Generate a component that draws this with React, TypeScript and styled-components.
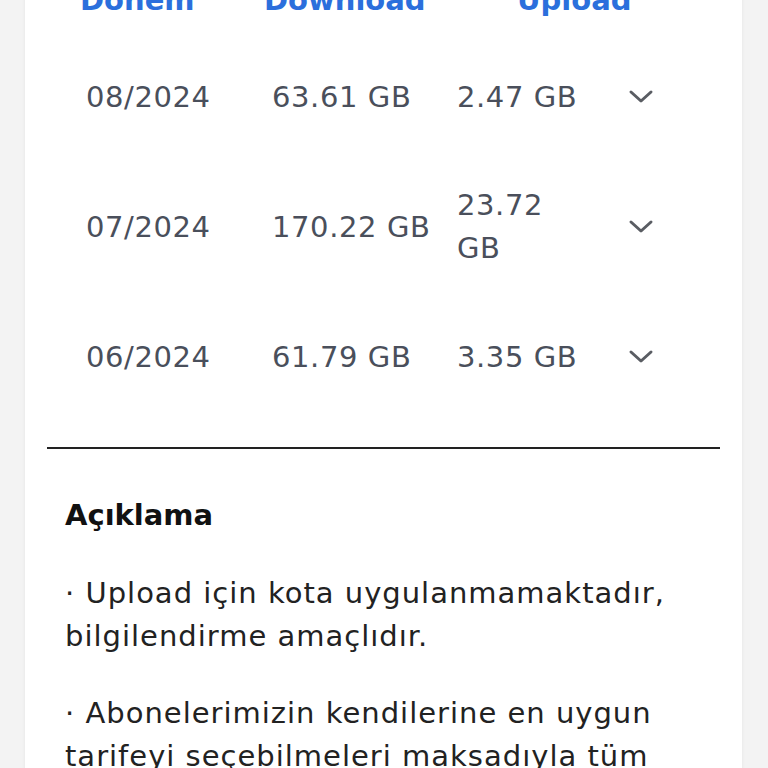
import React from "react";
import styled, { createGlobalStyle } from "styled-components";

const Global = createGlobalStyle`
  html, body { margin: 0; padding: 0; background: #f3f3f3; }
  body { font-family: "DejaVu Sans", "Noto Sans", sans-serif; overflow: hidden; }
`;

const Card = styled.div`
  margin: -20px 26px 0 25px;
  background: #ffffff;
  padding: 0 22px 40px;
  box-shadow: 0 0 4px rgba(0, 0, 0, 0.06);
  min-height: 820px;
`;

const HeaderRow = styled.div`
  display: grid;
  grid-template-columns: 186px 185px 1fr;
  height: 40px;
  align-items: center;
`;

const HeadCell = styled.div<{ $pad: number }>`
  padding-left: ${(p) => p.$pad}px;
  font-size: 29px;
  line-height: 40px;
  font-weight: 700;
  color: #2b6fdc;
  white-space: nowrap;
`;

const Rows = styled.div`
  margin-top: 12px;
`;

const Row = styled.div`
  display: grid;
  grid-template-columns: 186px 185px 171px 1fr;
  height: 130px;
  align-items: center;
`;

const Cell = styled.div<{ $wrap?: boolean }>`
  padding-left: 39px;
  font-size: 29px;
  letter-spacing: 0.6px;
  line-height: 43px;
  color: #4a4f5b;
  white-space: ${(p) => (p.$wrap ? "normal" : "nowrap")};
`;

const UploadCell = styled(Cell)`
  width: 132px;
`;

const Chevron = styled.div`
  padding-left: 39px;
  display: flex;
  align-items: center;
  color: #5a5d63;
`;

const Divider = styled.hr`
  margin: 25px 0 0;
  border: 0;
  height: 2px;
  background: #222;
`;

const Title = styled.h2`
  margin: 46px 0 0 18px;
  font-size: 29px;
  line-height: 40px;
  font-weight: 700;
  color: #111;
`;

const Para = styled.p`
  margin: 37px 0 0 18px;
  font-size: 29px;
  letter-spacing: 1px;
  line-height: 43px;
  color: #222;
  & + & { margin-top: 34px; }
`;

const rows = [
  { d: "08/2024", dl: "63.61 GB", ul: "2.47 GB" },
  { d: "07/2024", dl: "170.22 GB", ul: "23.72 GB" },
  { d: "06/2024", dl: "61.79 GB", ul: "3.35 GB" },
];

const ChevronIcon = () => (
  <svg width="26" height="16" viewBox="0 0 26 16" fill="none">
    <path d="M3 3 L13 12 L23 3" stroke="currentColor" strokeWidth="3" strokeLinecap="round" strokeLinejoin="round" />
  </svg>
);

export default function App() {
  return (
    <>
      <Global />
      <Card>
        <HeaderRow>
          <HeadCell $pad={33}>Dönem</HeadCell>
          <HeadCell $pad={31}>Download</HeadCell>
          <HeadCell $pad={99}>Upload</HeadCell>
        </HeaderRow>
        <Rows>
          {rows.map((r) => (
            <Row key={r.d}>
              <Cell>{r.d}</Cell>
              <Cell>{r.dl}</Cell>
              <UploadCell $wrap>{r.ul}</UploadCell>
              <Chevron>
                <ChevronIcon />
              </Chevron>
            </Row>
          ))}
        </Rows>
        <Divider />
        <Title>Açıklama</Title>
        <Para>· Upload için kota uygulanmamaktadır, bilgilendirme amaçlıdır.</Para>
        <Para>
          · Abonelerimizin kendilerine en uygun tarifeyi seçebilmeleri maksadıyla tüm
          kullanım bilgileri burada gösterilmektedir.
        </Para>
      </Card>
    </>
  );
}
